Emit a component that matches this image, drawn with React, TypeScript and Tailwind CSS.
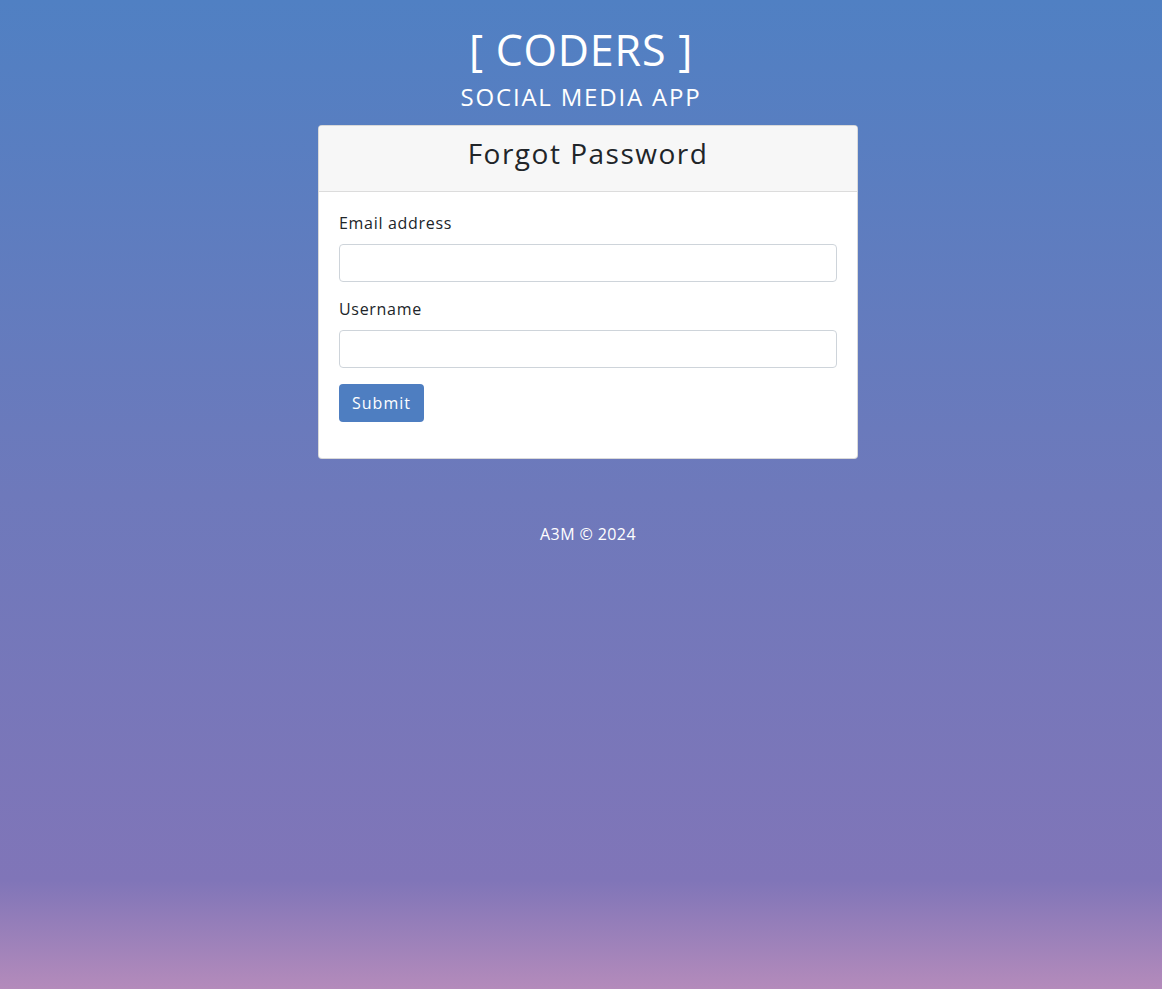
export default function App() {
  return (
    <div
      className="min-h-[989px] w-full flex flex-col items-center text-white bg-[linear-gradient(180deg,#5080c3_0%,#6e79bb_50%,#8075b8_89%,#b48bbb_100%)]"
      style={{ fontFamily: '"Open Sans", "Liberation Sans", sans-serif' }}
    >
      <h1 className="mt-[24px] text-[43px] leading-[52px] font-normal tracking-[0.8px]">[ CODERS ]</h1>
      <h2 className="mt-[6px] text-[24px] leading-[30px] tracking-[1.8px]">SOCIAL MEDIA APP</h2>
      <div className="flex flex-col items-center pl-[14px]">
        <div className="mt-[13px] w-[540px] bg-white rounded-[4px] border border-black/15 text-[#212529] overflow-hidden">
          <div className="h-[66px] pb-[12px] bg-[#f7f7f7] border-b border-[#dcdcdc] flex items-center justify-center">
            <span className="text-[28px] leading-none tracking-[1.5px]">Forgot Password</span>
          </div>
          <div className="px-[20px] pt-[21px] pb-[36px]">
            <label className="block text-[16px] leading-[20px] tracking-[0.7px]">Email address</label>
            <input className="mt-[11px] block w-full h-[38px] border border-[#ced4da] rounded-[4px] outline-none" />
            <label className="block mt-[17px] text-[16px] leading-[20px] tracking-[0.7px]">Username</label>
            <input className="mt-[11px] block w-full h-[38px] border border-[#ced4da] rounded-[4px] outline-none" />
            <button className="mt-[16px] h-[38px] w-[85px] bg-[#4e7ec1] text-white text-[16px] tracking-[1px] rounded-[4px]">Submit</button>
          </div>
        </div>
        <div className="mt-[63px] text-[16px] tracking-[0.4px]">A3M © 2024</div>
      </div>
    </div>
  );
}
